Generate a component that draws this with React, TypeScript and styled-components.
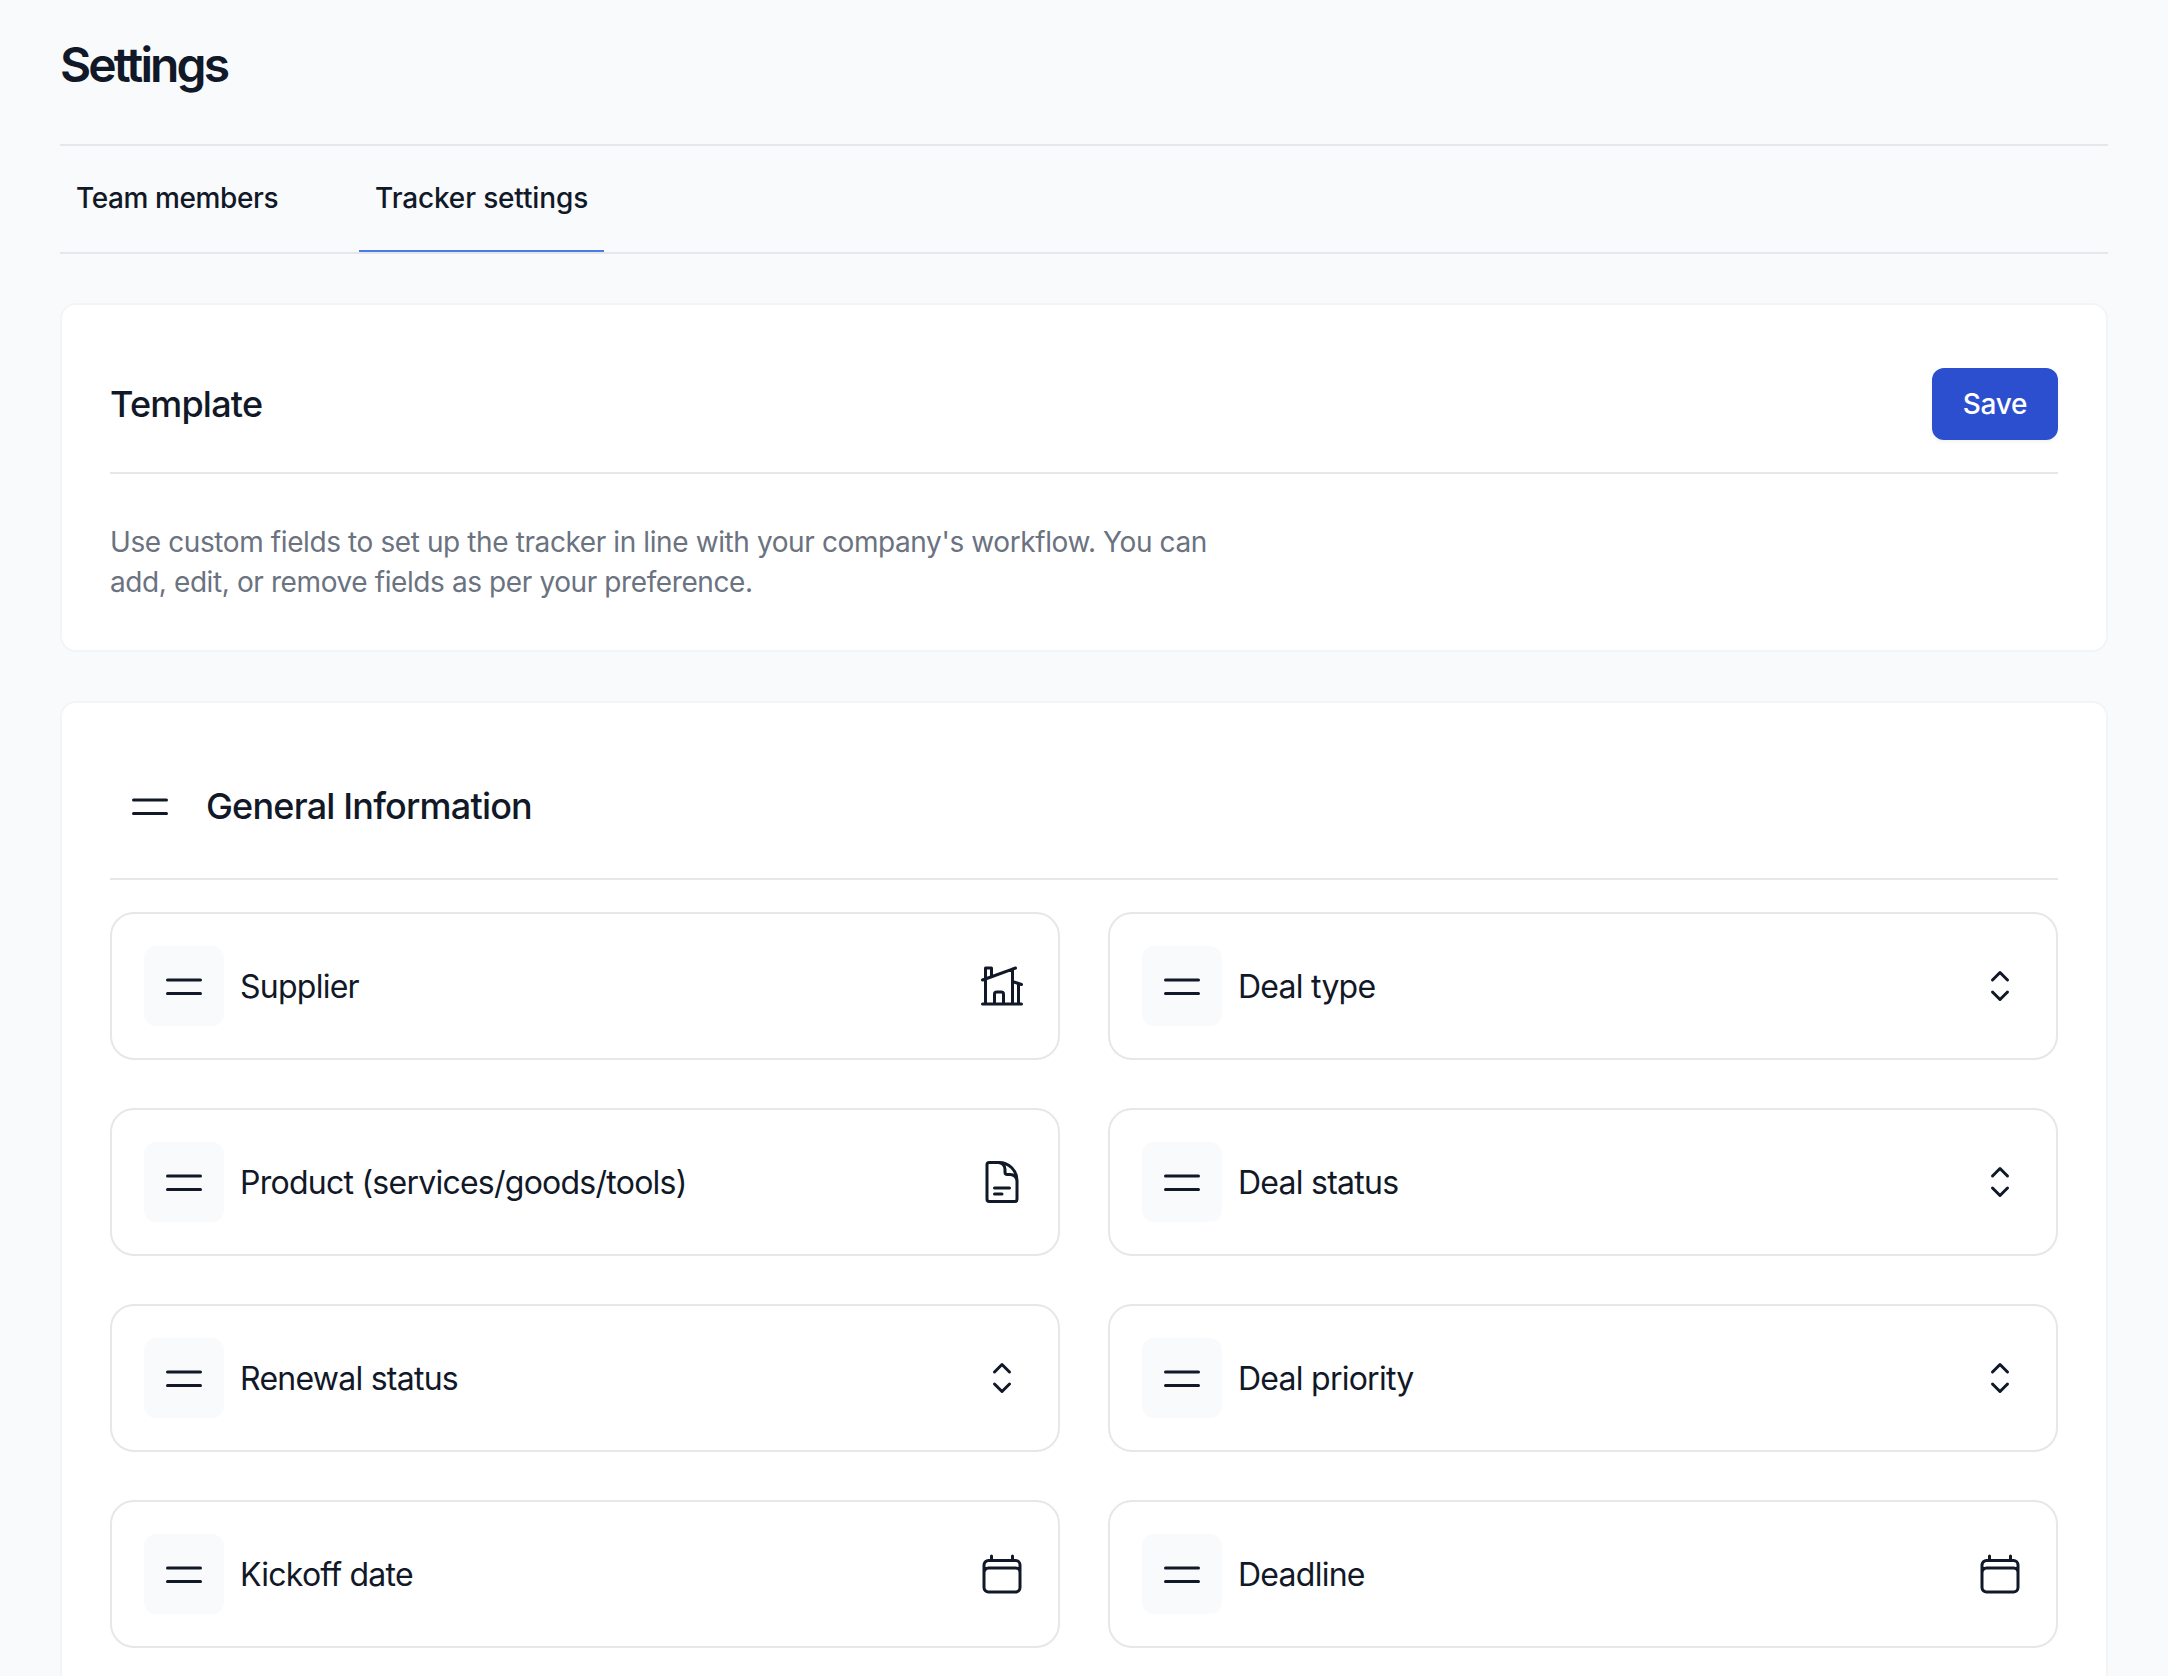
import React from "react";
import styled, { createGlobalStyle } from "styled-components";

const Global = createGlobalStyle`
  html, body { margin: 0; padding: 0; background: #f9fafb; }
  body { font-family: Inter, "Noto Sans", sans-serif; color: #111827; -webkit-font-smoothing: antialiased; }
  #root { height: 1676px; overflow: hidden; }
  * { box-sizing: border-box; }
`;

const Page = styled.main`
  padding: 0 60px;
`;

const PageTitle = styled.h1`
  margin: 0;
  height: 144px;
  padding-top: 36px;
  font-size: 48px;
  line-height: 58px;
  font-weight: 600;
  letter-spacing: -2.9px;
`;

const TabBar = styled.nav`
  display: flex;
  gap: 65px;
  height: 110px;
  border-top: 2px solid #e5e7eb;
  border-bottom: 2px solid #e5e7eb;
  margin-bottom: 49px;
`;

const Tab = styled.a<{ $active?: boolean }>`
  display: flex;
  align-items: center;
  padding: 0 16px;
  font-size: 28px;
  font-weight: 500;
  letter-spacing: ${(p) => (p.$active ? "-0.15px" : "-0.4px")};
  color: #111827;
  border-bottom: 2px solid ${(p) => (p.$active ? "#4a7ae8" : "transparent")};
`;

const Card = styled.section`
  background: #fff;
  border: 2px solid #f3f4f6;
  border-radius: 16px;
  padding: 63px 48px 48px;
  & + & { margin-top: 49px; }
`;

const CardHeader = styled.header`
  display: flex;
  align-items: center;
  justify-content: space-between;
  padding-bottom: 32px;
  border-bottom: 2px solid #e5e7eb;
`;

const CardTitle = styled.h2`
  margin: 0;
  font-size: 36px;
  line-height: 48px;
  font-weight: 500;
  letter-spacing: -0.8px;
`;

const SaveButton = styled.button`
  width: 126px;
  height: 72px;
  border: 0;
  border-radius: 12px;
  background: #2c4fcf;
  color: #fff;
  font-family: inherit;
  font-size: 28px;
  font-weight: 500;
  letter-spacing: -0.3px;
  box-shadow: 0 2px 4px rgba(0, 0, 0, 0.05);
`;

const Description = styled.p`
  margin: 48px 0 0;
  max-width: 1120px;
  font-size: 28px;
  line-height: 40px;
  letter-spacing: -0.4px;
  color: #6b7280;
`;

const SectionHeading = styled.div`
  display: flex;
  align-items: center;
  gap: 16px;
`;

const Handle = styled.span<{ $filled?: boolean }>`
  display: flex;
  align-items: center;
  justify-content: center;
  width: 80px;
  height: 80px;
  flex: none;
  border-radius: 12px;
  background: ${(p) => (p.$filled ? "#f9fafb" : "transparent")};
`;

const FieldGrid = styled.div`
  display: grid;
  grid-template-columns: 1fr 1fr;
  gap: 48px;
  margin-top: 32px;
`;

const Field = styled.div`
  display: flex;
  align-items: center;
  gap: 16px;
  height: 148px;
  padding: 0 32px;
  background: #fff;
  border: 2px solid #e5e7eb;
  border-radius: 24px;
`;

const FieldLabel = styled.span`
  flex: 1;
  padding-top: 2px;
  font-size: 32px;
  line-height: 48px;
  letter-spacing: -0.75px;
`;

const TrailingIcon = styled.span`
  display: flex;
  width: 48px;
  height: 48px;
`;

const Svg = styled.svg`
  width: 48px;
  height: 48px;
  flex: none;
  fill: none;
  stroke: #111827;
  stroke-width: 1.5;
  stroke-linecap: round;
  stroke-linejoin: round;
`;

const Bars = () => (
  <Svg viewBox="0 0 24 24"><path d="M3.75 9h16.5m-16.5 6.75h16.5" /></Svg>
);
const Modern = () => (
  <Svg viewBox="0 0 24 24"><path d="M8.25 21v-4.875c0-.621.504-1.125 1.125-1.125h2.25c.621 0 1.125.504 1.125 1.125V21m0 0h4.5V3.545M12.75 21h7.5V10.75M2.25 21h1.5m18 0h-18M2.25 9l4.5-1.636M18.75 3l-1.5.545m0 6.205l3 1m1.5.5l-1.5-.5M6.75 7.364V3h-3v18m3-13.636l10.5-3.819" /></Svg>
);
const Doc = () => (
  <Svg viewBox="0 0 24 24"><path d="M19.5 14.25v-2.625a3.375 3.375 0 00-3.375-3.375h-1.5A1.125 1.125 0 0113.5 7.125v-1.5a3.375 3.375 0 00-3.375-3.375H8.25m0 12.75h7.5m-7.5 3H12M10.5 2.25H5.625c-.621 0-1.125.504-1.125 1.125v17.25c0 .621.504 1.125 1.125 1.125h12.75c.621 0 1.125-.504 1.125-1.125V11.25a9 9 0 00-9-9z" /></Svg>
);
const UpDown = () => (
  <Svg viewBox="0 0 24 24"><path d="M8.25 15L12 18.75 15.75 15m-7.5-6L12 5.25 15.75 9" /></Svg>
);
const Calendar = () => (
  <Svg viewBox="0 0 24 24"><path d="M6.75 3v2.25M17.25 3v2.25M3 18.75V7.5a2.25 2.25 0 012.25-2.25h13.5A2.25 2.25 0 0121 7.5v11.25m-18 0A2.25 2.25 0 005.25 21h13.5A2.25 2.25 0 0021 18.75m-18 0v-7.5A2.25 2.25 0 015.25 9h13.5A2.25 2.25 0 0121 11.25v7.5" /></Svg>
);

const fields: [string, React.ComponentType][] = [
  ["Supplier", Modern],
  ["Deal type", UpDown],
  ["Product (services/goods/tools)", Doc],
  ["Deal status", UpDown],
  ["Renewal status", UpDown],
  ["Deal priority", UpDown],
  ["Kickoff date", Calendar],
  ["Deadline", Calendar],
];

export default function App() {
  return (
    <>
      <Global />
      <Page>
        <PageTitle>Settings</PageTitle>
        <TabBar>
          <Tab>Team members</Tab>
          <Tab $active>Tracker settings</Tab>
        </TabBar>
        <Card>
          <CardHeader>
            <CardTitle>Template</CardTitle>
            <SaveButton>Save</SaveButton>
          </CardHeader>
          <Description>
            Use custom fields to set up the tracker in line with your company's workflow. You can add, edit, or remove fields as per your preference.
          </Description>
        </Card>
        <Card>
          <CardHeader>
            <SectionHeading>
              <Handle><Bars /></Handle>
              <CardTitle>General Information</CardTitle>
            </SectionHeading>
          </CardHeader>
          <FieldGrid>
            {fields.map(([label, Icon]) => (
              <Field key={label}>
                <Handle $filled><Bars /></Handle>
                <FieldLabel>{label}</FieldLabel>
                <TrailingIcon><Icon /></TrailingIcon>
              </Field>
            ))}
          </FieldGrid>
        </Card>
      </Page>
    </>
  );
}
